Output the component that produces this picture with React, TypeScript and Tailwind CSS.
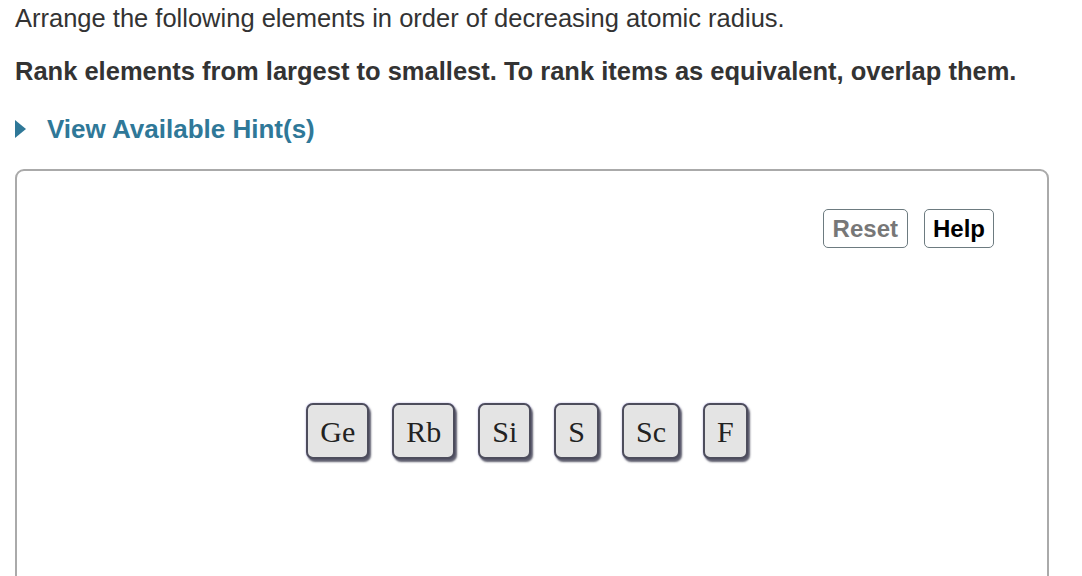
const items = ["Ge", "Rb", "Si", "S", "Sc", "F"];

const RankTile = ({ label }: { label: string }) => (
  <div className="h-[56px] px-[12px] flex items-center justify-center rounded-[7px] border-2 border-[#4d4d5c] bg-[#e4e4e4] shadow-[2px_3px_2px_rgba(40,40,60,0.75),0_0_2px_rgba(120,110,200,0.6)] text-[30px] text-[#222] font-['Liberation_Serif',serif]">
    {label}
  </div>
);

export default function App() {
  return (
    <div className="w-[1082px] h-[576px] overflow-hidden bg-white text-[#333] font-['Liberation_Sans',Arial,sans-serif]">
      <div className="pl-[15px] pt-[3px]">
        <p className="text-[25.5px] leading-[30px]">
          Arrange the following elements in order of decreasing atomic radius.
        </p>
        <p className="mt-[23px] text-[25.5px] leading-[30px] font-bold">
          Rank elements from largest to smallest. To rank items as equivalent, overlap them.
        </p>
        <div className="mt-[28px] flex items-center gap-[21px] text-[#2f7898] font-bold">
          <svg width="11" height="18" viewBox="0 0 11 18">
            <path d="M0 0 L11 9 L0 18 Z" fill="#2f7898" />
          </svg>
          <span className="text-[26px] leading-[30px]">View Available Hint(s)</span>
        </div>
      </div>
      <div className="ml-[15px] mt-[25px] w-[1034px] h-[420px] border-2 border-[#aaa] rounded-[9px]">
        <div className="flex justify-end gap-[16px] pt-[38px] pr-[53px]">
          <button className="h-[39px] px-[9px] rounded-[5px] border-[1.5px] border-[#6d7b80] text-[24px] font-bold text-[#777]">
            Reset
          </button>
          <button className="h-[39px] px-[8px] rounded-[5px] border-[1.5px] border-[#6d7b80] text-[24px] font-bold text-black">
            Help
          </button>
        </div>
        <div className="mt-[155px] flex justify-center gap-[23px] pr-[10px]">
          {items.map((it) => (
            <RankTile key={it} label={it} />
          ))}
        </div>
      </div>
    </div>
  );
}
